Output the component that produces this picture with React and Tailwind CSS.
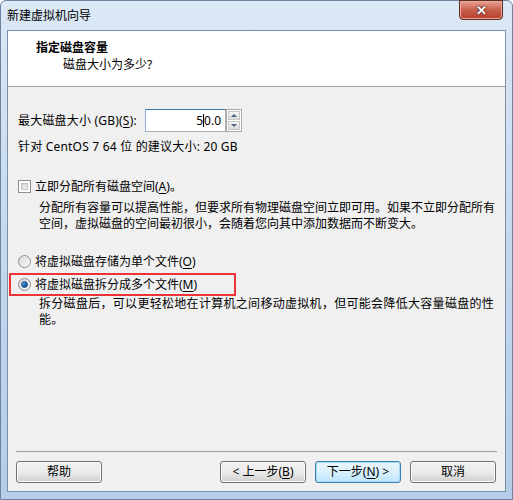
import React from "react";

const font = { fontFamily: '"Noto Sans", "Noto Sans CJK SC", sans-serif' };

function U({ children }) {
  return <span className="underline underline-offset-2">{children}</span>;
}

function Checkbox() {
  return (
    <div className="w-[13px] h-[13px] border border-[#8f8f8f] bg-white p-[2px] shrink-0">
      <div className="w-full h-full border border-[#c4c4c4] bg-gradient-to-br from-[#d4d4d4] to-[#f4f4f4]" />
    </div>
  );
}

function Radio({ checked }) {
  return (
    <div className="w-[13px] h-[13px] rounded-full border border-[#8f8f8f] bg-gradient-to-br from-[#d8d8d8] to-[#fafafa] flex items-center justify-center shrink-0">
      {checked && (
        <div className="w-[7px] h-[7px] rounded-full bg-gradient-to-br from-[#7ec4f0] via-[#1c72b8] to-[#0d4f8a] border border-[#1a4d7a]" />
      )}
    </div>
  );
}

function Button({ children, primary, className = "" }) {
  return (
    <div
      className={
        "w-[86px] h-[22px] rounded-[3px] border flex items-center justify-center text-[12px] text-black " +
        (primary
          ? "border-[#3c7fb1] bg-gradient-to-b from-[#eaf6fd] via-[#d9f0fc] to-[#bee6fd] shadow-[inset_0_0_0_1px_#a9dbf6] "
          : "border-[#707070] bg-gradient-to-b from-[#f2f2f2] via-[#ebebeb] to-[#cfcfcf] shadow-[inset_0_0_0_1px_#fcfcfc] ") +
        className
      }
    >
      {children}
    </div>
  );
}

export default function App() {
  return (
    <div style={font} className="w-[513px] h-[500px] overflow-hidden bg-white">
      <div className="w-[513px] h-[500px] flex flex-col rounded-t-[6px] border border-[#6d829c] bg-gradient-to-b from-[#dbe8f6] via-[#c4d8ee] to-[#b5cde8]">
        {/* title bar */}
        <div className="h-[29px] flex items-start relative shrink-0">
          <div className="pl-[6px] pt-[7px] text-[12px] text-black leading-[16px]">新建虚拟机向导</div>
          <div className="absolute right-[9px] top-[-1px] w-[44px] h-[20px] rounded-b-[4px] border border-[#5d2a25] bg-gradient-to-b from-[#e8a293] via-[#c85e4c] to-[#b7402d] flex items-center justify-center shadow-[inset_0_0_0_1px_#e9a899]">
            <span className="text-white text-[13px] font-bold leading-none" style={{ textShadow: "0 0 2px #3b1510, 0 0 1px #3b1510" }}>✕</span>
          </div>
        </div>

        {/* client */}
        <div className="flex-1 mx-[6px] mb-[7px] border border-[#7d8fa5] flex flex-col bg-[#f0f0f0]">
          <div className="h-[56px] bg-white border-b border-[#a0a0a0] shrink-0 pt-[9px]">
            <div className="pl-[28px] text-[12px] font-bold leading-[16px] text-black">指定磁盘容量</div>
            <div className="pl-[55px] text-[12px] leading-[16px] mt-[1px] text-black">磁盘大小为多少?</div>
          </div>

          <div className="flex-1 flex flex-col pl-[10px] pr-[10px] text-[12px] text-black">
            <div className="flex items-center mt-[22px] h-[23px]">
              <span className="leading-[15px] w-[127px] tracking-[0.2px]">
                最大磁盘大小 (GB)(<U>S</U>):
              </span>
              <div className="flex h-[23px]">
                <div className="w-[81px] h-[23px] bg-white border border-[#abadb3] border-t-[#3d7bad] border-l-[#8db2e3] flex items-center justify-end pr-[4px] text-[12px]">
                  <span>5</span>
                  <span className="inline-block w-[1px] h-[13px] bg-black" />
                  <span>0.0</span>
                </div>
                <div className="w-[16px] h-[23px] flex flex-col border border-[#a9a9a9] bg-white">
                  <div className="flex-1 m-[1px] mb-0 bg-gradient-to-b from-[#f4f4f4] to-[#dcdcdc] border border-[#c6c6c6] flex items-center justify-center">
                    <div className="w-0 h-0 border-l-[3px] border-r-[3px] border-b-[3px] border-l-transparent border-r-transparent border-b-[#4d6185]" />
                  </div>
                  <div className="flex-1 m-[1px] bg-gradient-to-b from-[#f4f4f4] to-[#dcdcdc] border border-[#c6c6c6] flex items-center justify-center">
                    <div className="w-0 h-0 border-l-[3px] border-r-[3px] border-t-[3px] border-l-transparent border-r-transparent border-t-[#4d6185]" />
                  </div>
                </div>
              </div>
            </div>

            <div className="mt-[7px] leading-[15px] tracking-[0.2px]">针对 CentOS 7 64 位 的建议大小: 20 GB</div>

            <div className="mt-[25px] flex items-center gap-[4px] h-[15px]">
              <Checkbox />
              <span className="leading-[15px]">
                立即分配所有磁盘空间(<U>A</U>)。
              </span>
            </div>

            <div className="mt-[6px] pl-[21px] leading-[16px] whitespace-nowrap">
              分配所有容量可以提高性能，但要求所有物理磁盘空间立即可用。如果不立即分配所有
              <br />
              空间，虚拟磁盘的空间最初很小，会随着您向其中添加数据而不断变大。
            </div>

            <div className="mt-[22px] flex items-center gap-[4px] h-[15px]">
              <Radio />
              <span className="leading-[15px]">
                将虚拟磁盘存储为单个文件(<U>O</U>)
              </span>
            </div>

            <div className="relative mt-[8px] flex items-center gap-[4px] h-[15px]">
              <div className="absolute left-[-9px] top-[-4px] w-[227px] h-[23px] border-2 border-[#ee3338]" />
              <Radio checked />
              <span className="leading-[15px]">
                将虚拟磁盘拆分成多个文件(<U>M</U>)
              </span>
            </div>

            <div className="mt-[4px] pl-[21px] leading-[16px] whitespace-nowrap tracking-[0.3px]">
              拆分磁盘后，可以更轻松地在计算机之间移动虚拟机，但可能会降低大容量磁盘的性
              <br />
              能。
            </div>

            <div className="flex-1" />

            <div className="border-t border-[#a0a0a0] mx-[-2px]" />
            <div className="flex items-center h-[22px] mt-[9px] mb-[8px]">
              <Button className="ml-[-2px]">帮助</Button>
              <div className="flex-1" />
              <Button>
                &lt; 上一步(<U>B</U>)
              </Button>
              <Button primary className="ml-[9px]">
                下一步(<U>N</U>) &gt;
              </Button>
              <Button className="ml-[9px] mr-[-1px]">取消</Button>
            </div>
          </div>
        </div>
      </div>
    </div>
  );
}
